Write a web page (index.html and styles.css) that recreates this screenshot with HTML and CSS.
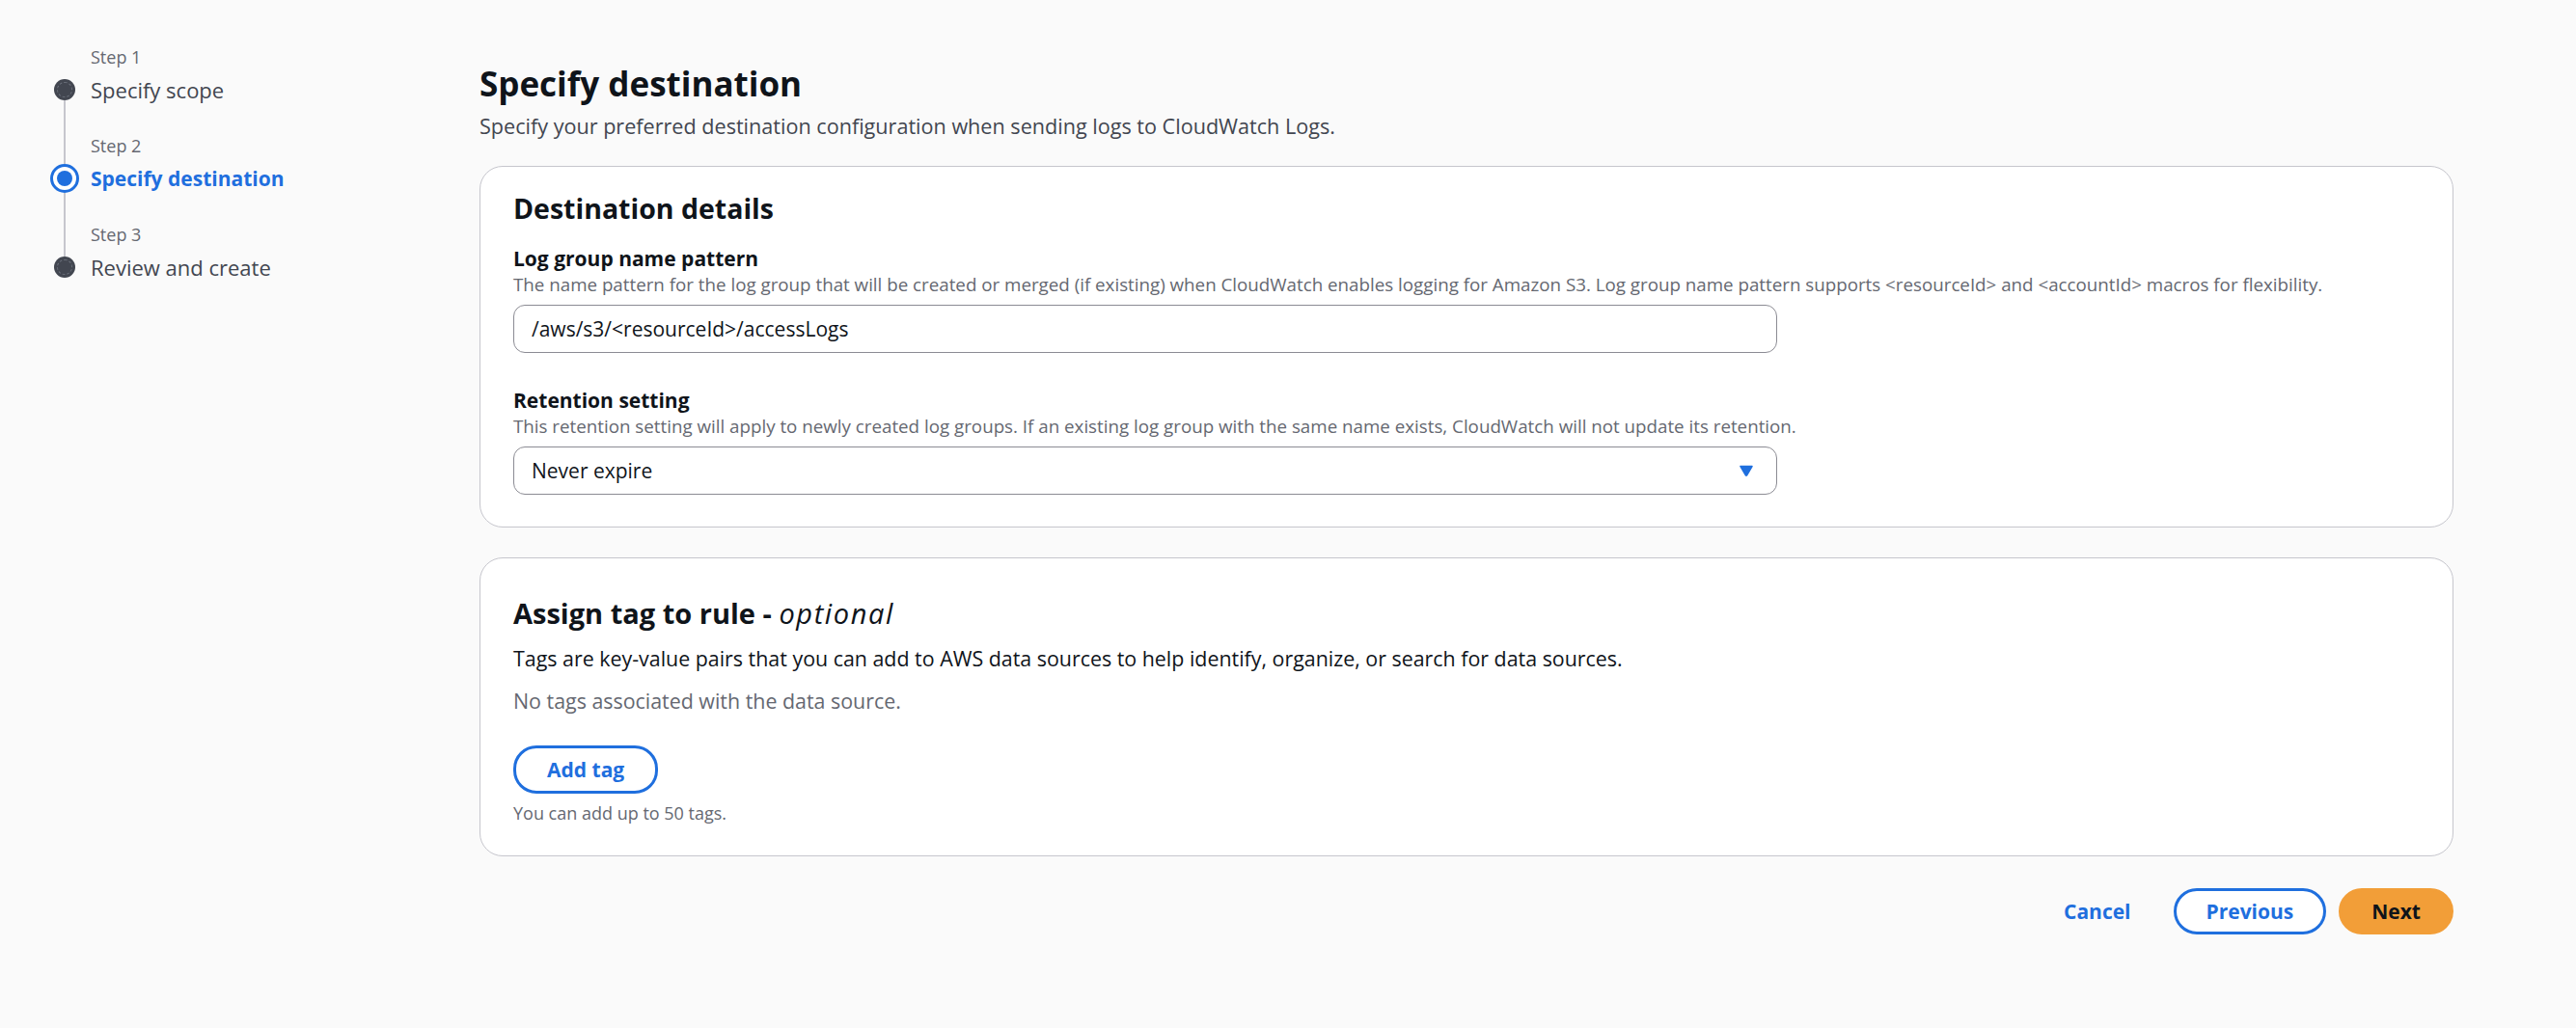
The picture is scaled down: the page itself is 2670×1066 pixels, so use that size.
FILE: index.html
```html
<!DOCTYPE html>
<html lang="en">
<head>
    <meta charset="UTF-8">
    <meta name="viewport" content="width=device-width, initial-scale=1.0">
    <title>Specify destination</title>
    <link rel="stylesheet" href="styles.css">
</head>
<body>

    <div class="layout">
        <nav class="wizard-nav">
            <ol class="steps">
                <li class="step step-first">
                    <div class="rail">
                        <span class="seg seg-top"></span>
                        <span class="dot"></span>
                        <span class="seg seg-bottom"></span>
                    </div>
                    <div class="step-text">
                        <span class="step-label">Step 1</span>
                        <span class="step-title">Specify scope</span>
                    </div>
                </li>
                <li class="step step-active">
                    <div class="rail">
                        <span class="seg seg-top"></span>
                        <span class="dot"></span>
                        <span class="seg seg-bottom"></span>
                    </div>
                    <div class="step-text">
                        <span class="step-label">Step 2</span>
                        <span class="step-title">Specify destination</span>
                    </div>
                </li>
                <li class="step step-last">
                    <div class="rail">
                        <span class="seg seg-top"></span>
                        <span class="dot"></span>
                        <span class="seg seg-bottom"></span>
                    </div>
                    <div class="step-text">
                        <span class="step-label">Step 3</span>
                        <span class="step-title">Review and create</span>
                    </div>
                </li>
            </ol>
        </nav>

        <main class="main">
            <h1 class="page-title">Specify destination</h1>
            <p class="page-desc">Specify your preferred destination configuration when sending logs to CloudWatch Logs.</p>

            <section class="card card-destination">
                <h2 class="card-title">Destination details</h2>

                <div class="field">
                    <label class="field-label" for="log-group">Log group name pattern</label>
                    <div class="field-desc">The name pattern for the log group that will be created or merged (if existing) when CloudWatch enables logging for Amazon S3. Log group name pattern supports &lt;resourceId&gt; and &lt;accountId&gt; macros for flexibility.</div>
                    <input type="text" class="text-input" id="log-group" value="/aws/s3/<resourceId>/accessLogs">
                </div>

                <div class="field">
                    <label class="field-label" for="retention">Retention setting</label>
                    <div class="field-desc">This retention setting will apply to newly created log groups. If an existing log group with the same name exists, CloudWatch will not update its retention.</div>
                    <button type="button" class="select" id="retention">
                        <span>Never expire</span>
                        <svg class="caret" width="14" height="12" viewBox="0 0 14 12"><path d="M1 1.5 H13 L7.6 10.8 Q7 11.6 6.4 10.8 Z" fill="#1f6fde" stroke="#1f6fde" stroke-width="1.5" stroke-linejoin="round"/></svg>
                    </button>
                </div>
            </section>

            <section class="card card-tags">
                <h2 class="card-title">Assign tag to rule - <i>optional</i></h2>
                <p class="card-text">Tags are key-value pairs that you can add to AWS data sources to help identify, organize, or search for data sources.</p>
                <p class="card-text muted">No tags associated with the data source.</p>
                <button type="button" class="btn btn-normal btn-add">Add tag</button>
                <div class="hint">You can add up to 50 tags.</div>
            </section>

            <div class="actions">
                <button type="button" class="btn btn-link">Cancel</button>
                <button type="button" class="btn btn-normal">Previous</button>
                <button type="button" class="btn btn-primary">Next</button>
            </div>
        </main>
    </div>

</body>
</html>
```

FILE: styles.css
```css
body {
    font-family: "Open Sans", "Noto Sans", Arial, sans-serif;
    margin: 0;
    padding: 0;
    background-color: #fafafa;
    color: #0f141a;
}
.layout {
    display: flex;
    min-height: 1066px;
}

/* wizard navigation */
.wizard-nav {
    width: 497px;
    flex-shrink: 0;
}
.steps {
    list-style: none;
    margin: 0;
    padding: 47px 0 0 52px;
}
.step {
    display: flex;
    gap: 12px;
}
.rail {
    width: 30px;
    display: flex;
    flex-direction: column;
    align-items: center;
}
.seg {
    width: 2px;
    background-color: #c6c6cd;
}
.seg-top {
    height: 35px;
}
.seg-bottom {
    flex: 1;
}
.step-first .seg-top,
.step-last .seg-bottom {
    background-color: transparent;
}
.dot {
    position: relative;
    width: 22px;
    height: 22px;
    border-radius: 50%;
    background-color: #424650;
    box-sizing: border-box;
}
.dot::after {
    content: "";
    position: absolute;
    inset: 3px;
    border-radius: 50%;
    border: 1px dashed #6c717c;
}
.step-active .seg-top {
    height: 31px;
}
.step-active .dot {
    width: 30px;
    height: 30px;
    background-color: #fff;
    border: 3px solid #1f6fde;
}
.step-active .dot::after {
    inset: 4px;
    border: none;
    background-color: #1f6fde;
}
.step-text {
    display: flex;
    flex-direction: column;
    padding-bottom: 31px;
}
.step-label {
    font-size: 18px;
    line-height: 24px;
    color: #656871;
}
.step-title {
    margin-top: 7px;
    font-size: 22px;
    line-height: 30px;
    color: #424650;
}
.step-active .step-title {
    color: #1f6fde;
    font-weight: 700;
    font-size: 21px;
}

/* main column */
.main {
    flex: 1;
    padding: 64px 127px 40px 0;
}
.page-title {
    margin: 0;
    font-size: 35px;
    line-height: 45px;
    font-weight: 700;
    color: #0f141a;
}
.page-desc {
    margin: 7px 0 0 0;
    font-size: 21.6px;
    line-height: 30px;
    color: #424650;
}
.card {
    background-color: white;
    border: 1px solid #c6c6cd;
    border-radius: 24px;
}
.card-destination {
    margin-top: 26px;
    padding: 27px 34px 33px 34px;
}
.card-tags {
    margin-top: 31px;
    padding: 40px 34px 32px 34px;
}
.card-title {
    margin: 0;
    font-size: 28.5px;
    line-height: 33px;
    font-weight: 700;
    color: #0f141a;
}
.card-tags .card-title {
    font-size: 29px;
}
.card-title i {
    font-weight: 400;
    letter-spacing: 1.6px;
}
.field {
    margin-top: 22px;
}
.field + .field {
    margin-top: 36px;
}
.field-label {
    display: block;
    font-size: 21px;
    line-height: 27px;
    font-weight: 700;
    color: #0f141a;
}
.field-desc {
    font-size: 18.75px;
    line-height: 26px;
    color: #656871;
}
.text-input,
.select {
    display: flex;
    align-items: center;
    box-sizing: border-box;
    width: 66.3%;
    height: 50px;
    margin-top: 8px;
    padding: 0 18px;
    font-family: inherit;
    font-size: 21px;
    color: #0f141a;
    background-color: white;
    border: 1px solid #8c8c94;
    border-radius: 12px;
}
.select {
    justify-content: space-between;
    padding-right: 24px;
    text-align: left;
}
.caret {
    display: block;
}
.card-text {
    margin: 14px 0 0 0;
    font-size: 21.4px;
    line-height: 30px;
    color: #0f141a;
}
.card-title + .card-text {
    margin-top: 16px;
}
.card-text.muted {
    color: #656871;
}
.hint {
    margin-top: 8px;
    font-size: 18px;
    line-height: 24px;
    color: #656871;
}

/* buttons */
.btn {
    box-sizing: border-box;
    height: 48px;
    padding: 0 31px;
    font-family: inherit;
    font-size: 21px;
    font-weight: 700;
    border-radius: 24px;
    cursor: pointer;
}
.btn-normal {
    color: #1f6fde;
    background-color: white;
    border: 3px solid #1f6fde;
}
.btn-add {
    display: block;
    height: 50px;
    margin-top: 31px;
    padding: 0 32px;
}
.btn-link {
    color: #1f6fde;
    background: none;
    border: 3px solid transparent;
}
.btn-primary {
    color: #0f141a;
    background-color: #f29e38;
    border: 3px solid #f29e38;
}
.actions {
    display: flex;
    justify-content: flex-end;
    gap: 13px;
    margin-top: 33px;
}
.actions .btn-link {
    margin-right: -3px;
}
```
